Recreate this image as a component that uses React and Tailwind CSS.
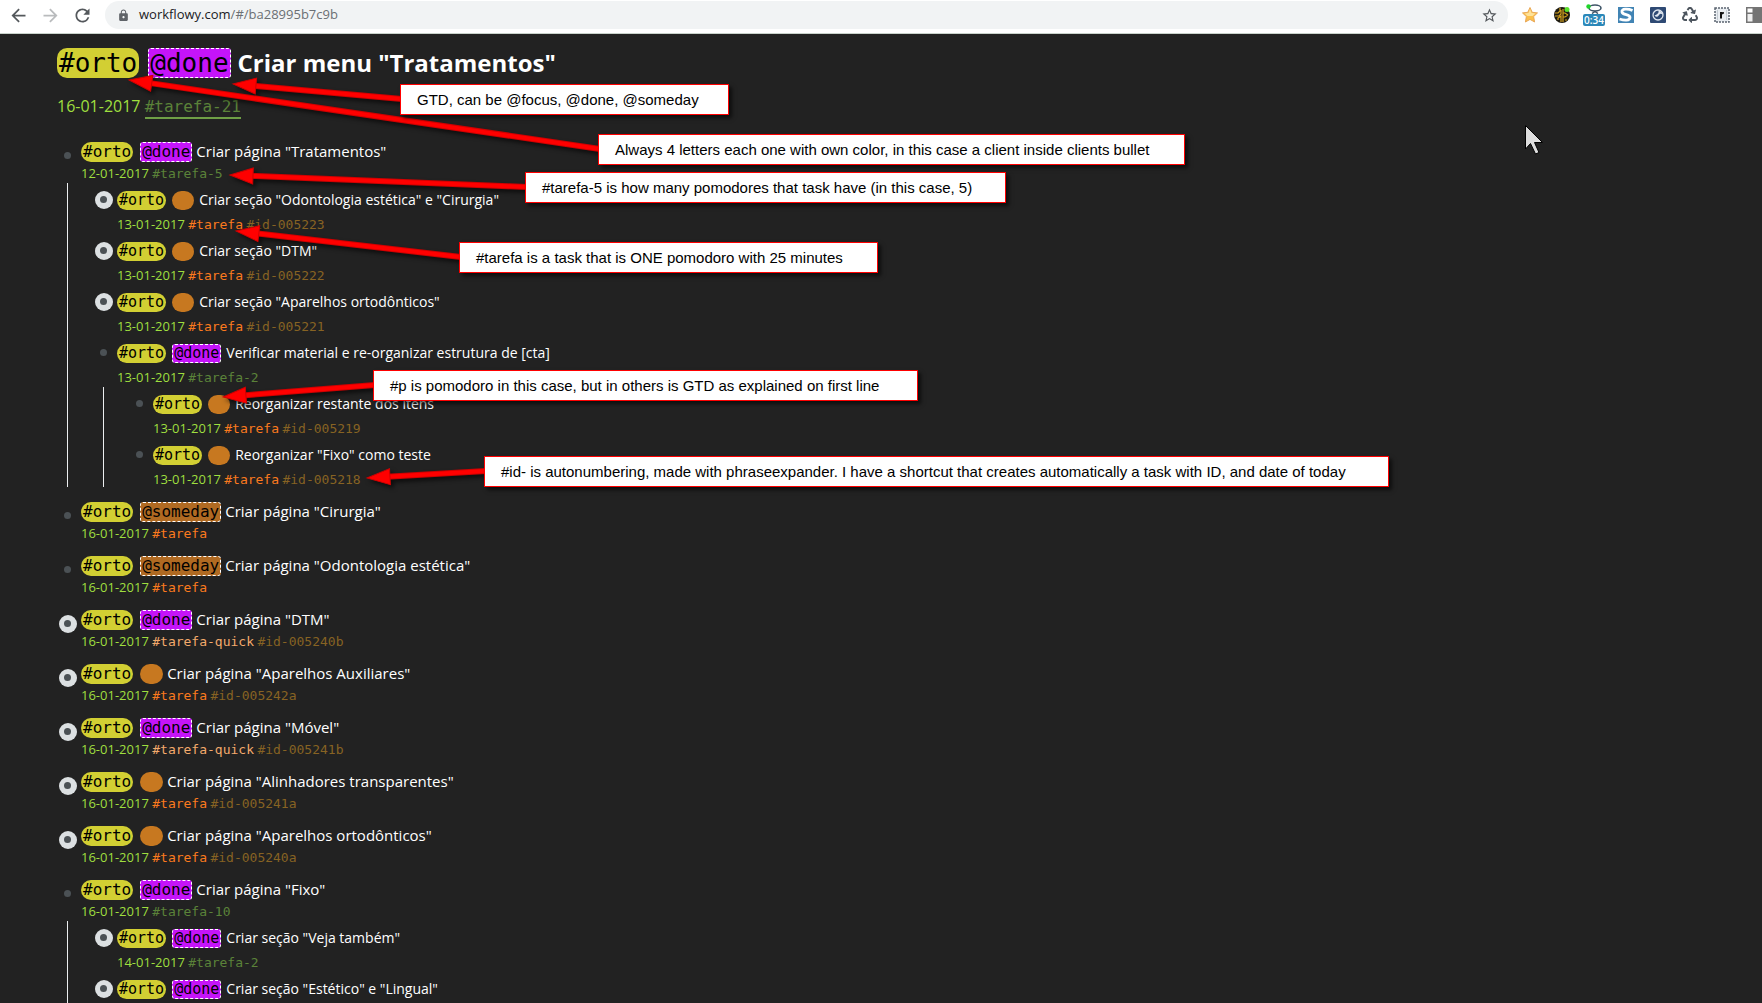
import { FaRecycle } from "react-icons/fa";
import { MdArrowBack, MdArrowForward, MdLock, MdRefresh, MdStarBorder } from "react-icons/md";

const items = [
  {
    gtd: "@done",
    title: 'Criar página "Tratamentos"',
    date: "12-01-2017",
    tag: "#tarefa-5",
    children: [
      { zoomable: true, title: 'Criar seção "Odontologia estética" e "Cirurgia"', date: "13-01-2017", tag: "#tarefa", id: "#id-005223" },
      { zoomable: true, title: 'Criar seção "DTM"', date: "13-01-2017", tag: "#tarefa", id: "#id-005222" },
      { zoomable: true, title: 'Criar seção "Aparelhos ortodônticos"', date: "13-01-2017", tag: "#tarefa", id: "#id-005221" },
      {
        gtd: "@done",
        title: "Verificar material e re-organizar estrutura de [cta]",
        date: "13-01-2017",
        tag: "#tarefa-2",
        children: [
          { title: "Reorganizar restante dos itens", date: "13-01-2017", tag: "#tarefa", id: "#id-005219" },
          { title: 'Reorganizar "Fixo" como teste', date: "13-01-2017", tag: "#tarefa", id: "#id-005218" },
        ],
      },
    ],
  },
  { gtd: "@someday", title: 'Criar página "Cirurgia"', date: "16-01-2017", tag: "#tarefa" },
  { gtd: "@someday", title: 'Criar página "Odontologia estética"', date: "16-01-2017", tag: "#tarefa" },
  { zoomable: true, gtd: "@done", title: 'Criar página "DTM"', date: "16-01-2017", tag: "#tarefa-quick", id: "#id-005240b" },
  { zoomable: true, title: 'Criar página "Aparelhos Auxiliares"', date: "16-01-2017", tag: "#tarefa", id: "#id-005242a" },
  { zoomable: true, gtd: "@done", title: 'Criar página "Móvel"', date: "16-01-2017", tag: "#tarefa-quick", id: "#id-005241b" },
  { zoomable: true, title: 'Criar página "Alinhadores transparentes"', date: "16-01-2017", tag: "#tarefa", id: "#id-005241a" },
  { zoomable: true, title: 'Criar página "Aparelhos ortodônticos"', date: "16-01-2017", tag: "#tarefa", id: "#id-005240a" },
  {
    gtd: "@done",
    title: 'Criar página "Fixo"',
    date: "16-01-2017",
    tag: "#tarefa-10",
    children: [
      { zoomable: true, gtd: "@done", title: 'Criar seção "Veja também"', date: "14-01-2017", tag: "#tarefa-2" },
      { zoomable: true, gtd: "@done", title: 'Criar seção "Estético" e "Lingual"' },
    ],
  },
];

const notes = [
  { text: "GTD, can be @focus, @done, @someday", place: "left-[400px] top-[84px] w-[329px]" },
  { text: "Always 4 letters each one with own color, in this case a client inside clients bullet", place: "left-[598px] top-[134px] w-[587px]" },
  { text: "#tarefa-5 is how many pomodores that task have (in this case, 5)", place: "left-[525px] top-[172px] w-[481px]" },
  { text: "#tarefa is a task that is ONE pomodoro with 25 minutes", place: "left-[459px] top-[242px] w-[419px]" },
  { text: "#p is pomodoro in this case, but in others is GTD as explained on first line", place: "left-[373px] top-[370px] w-[545px]" },
  { text: "#id- is autonumbering, made with phraseexpander. I have a shortcut that creates automatically a task with ID, and date of today", place: "left-[484px] top-[456px] w-[905px]" },
];

// from = the edge of the note, to = the tip of the arrow
const arrows = [
  { from: [402, 99], to: [233, 84] },
  { from: [600, 149], to: [129, 80] },
  { from: [527, 187], to: [230, 175] },
  { from: [461, 257], to: [236, 231] },
  { from: [375, 385], to: [223, 397] },
  { from: [486, 471], to: [367, 478] },
];

const gtdColors = {
  "@done": "bg-[#c514f9]",
  "@someday": "bg-[#b06a22]",
};

const tagColor = (tag) => {
  if (tag === "#tarefa") return "text-[#fb7a1e]";
  if (tag === "#tarefa-quick") return "text-[#f3aa6c]";
  return "text-[#5b8239]";
};

const Bullet = ({ zoomable }) =>
  zoomable ? (
    <span className="flex size-[18px] items-center justify-center rounded-full bg-[#dce0e2]">
      <span className="size-[7px] rounded-full bg-[#4b5155]" />
    </span>
  ) : (
    <span className="size-[7px] rounded-full bg-[#4b5155]" />
  );

const Gtd = ({ tag, nested }) => {
  if (!tag) {
    return (
      <span
        className={nested ? "ml-[6px] h-[19px] w-[22px] rounded-full bg-[#c77820]" : "ml-[7px] h-5 w-[23px] rounded-full bg-[#c77820]"}
      />
    );
  }
  return (
    <span
      className={`rounded-[3px] border border-dashed border-white px-px font-['DejaVu_Sans_Mono',monospace] text-black ${
        nested ? "ml-[6px] leading-[17px]" : "ml-[7px] leading-[18px]"
      } ${gtdColors[tag]}`}
    >
      {tag}
    </span>
  );
};

const Item = ({ item, nested }) => (
  <li className={nested ? "" : "mb-[13px]"}>
    <div className={nested ? "flex h-[51px] pt-2" : "flex h-[41px]"}>
      <a
        href="#item"
        aria-label={item.title}
        className={
          nested
            ? "-mt-px mr-1 flex size-[19px] shrink-0 items-center justify-center"
            : "mt-1 mr-1 flex size-[19px] shrink-0 items-center justify-center"
        }
      >
        <Bullet zoomable={item.zoomable} />
      </a>
      <div className="whitespace-nowrap">
        <div className={nested ? "flex h-[19px] items-start text-[15px]" : "flex h-5 items-start text-[16px]"}>
          <span
            className={
              nested
                ? "rounded-full bg-[#d2cf33] px-[2px] font-['DejaVu_Sans_Mono',monospace] leading-[19px] text-black"
                : "rounded-full bg-[#d2cf33] px-[2px] font-['DejaVu_Sans_Mono',monospace] leading-[20px] text-black"
            }
          >
            #orto
          </span>
          <Gtd tag={item.gtd} nested={nested} />
          <span className={nested ? "ml-[5px] text-[14px] leading-[18px] text-white" : "ml-1 text-[15px] leading-[18px] text-white"}>
            {item.title}
          </span>
        </div>
        {item.date && (
          <div className={nested ? "mt-1 text-[13px] leading-[20px]" : "mt-px text-[13px] leading-[20px]"}>
            <span className="text-[#9fdf3f]">{item.date}</span>{" "}
            <span className={`font-['DejaVu_Sans_Mono',monospace] ${tagColor(item.tag)}`}>{item.tag}</span>{" "}
            {item.id && <span className="font-['DejaVu_Sans_Mono',monospace] text-[#876323]">{item.id}</span>}
          </div>
        )}
      </div>
    </div>
    {item.children && (
      <ul className="relative pl-[36px] before:absolute before:top-0 before:bottom-0.5 before:left-[9px] before:w-px before:bg-[#eceef0]">
        {item.children.map((child) => (
          <Item key={child.title} item={child} nested />
        ))}
      </ul>
    )}
  </li>
);

const Arrow = ({ from, to }) => {
  const dx = from[0] - to[0];
  const dy = from[1] - to[1];
  const length = Math.hypot(dx, dy);
  const angle = (Math.atan2(dy, dx) * 180) / Math.PI;
  return (
    <g transform={`translate(${to[0]} ${to[1]}) rotate(${angle})`}>
      <path d={`M20 0H${length}`} stroke="#d00000" strokeWidth="6" strokeLinecap="round" />
      <path d={`M20 0H${length}`} stroke="#ff0000" strokeWidth="4" strokeLinecap="round" />
      <path d="M0 0L23 -8V8Z" fill="#ff0000" stroke="#d00000" />
    </g>
  );
};

const Extensions = () => (
  <div className="flex shrink-0 items-center gap-4">
    <svg width="16" height="16" viewBox="0 0 16 16">
      <path d="M8 .5l2.200 4.800 5.300.6-3.900 3.700 1 5.400L8 12.400 3.400 15l1-5.400L.5 5.900l5.300-.6z" fill="#fbc04a" stroke="#e9a85a" />
      <path d="M8 2l1.500 4 4 .5-3 2.500h-5l-3-2.500 4-.5z" fill="#fee29a" />
    </svg>
    <svg width="16" height="16" viewBox="0 0 16 16">
      <circle cx="8" cy="8" r="8" fill="#1d1a10" />
      <path d="M1 6h3l2-2V1M1 9h4l2-2V3M4 13V11l3-2v6M9 2v13M9 6h2l3 2M9 10h2l3-2M11 13h2" stroke="#d5a21f" strokeWidth="1.200" fill="none" />
      <circle cx="13" cy="2.500" r="2.500" fill="#5be02c" />
    </svg>
    <div className="-mx-[3px] flex w-[22px] flex-col items-center self-end">
      <svg width="16" height="10" viewBox="0 0 16 10">
        <ellipse cx="9" cy="4" rx="6" ry="3" fill="#fff" stroke="#3f5568" strokeWidth="1.600" />
        <path d="M6 9.500l3-2 3 2" stroke="#3f5568" strokeWidth="1.500" fill="none" />
        <circle cx="2.500" cy="2.500" r="2.200" fill="#1fd52a" />
      </svg>
      <span className="w-full rounded-[2px] bg-[#2b87b8] text-center font-['Open_Sans',sans-serif] text-[10px] leading-[12px] font-semibold text-white">
        0:34
      </span>
    </div>
    <svg width="16" height="16" viewBox="0 0 16 16">
      <rect width="16" height="16" fill="#4184b4" />
      <path d="M14.500 3.500C10 1.500 3 1.500 4 5s8 2 8 5.500-6 3-10.500 1.500" stroke="#fff" strokeWidth="2.800" fill="none" />
    </svg>
    <svg width="16" height="16" viewBox="0 0 16 16">
      <rect width="16" height="16" rx="1" fill="#2e4a74" />
      <circle cx="8" cy="8" r="5" fill="none" stroke="#dfe6ef" strokeWidth="1.300" />
      <path d="M4.500 8.500c1.500 2 3.500 1.500 4.500-.5 1-1.500 2.500-1.500 3.500-.5-.5-3-2.500-4-4.500-4 1.500 1.500 0 4-3.500 5z" fill="#dfe6ef" />
    </svg>
    <FaRecycle size={16} color="#4d555e" />
    <svg width="16" height="16" viewBox="0 0 16 16">
      <rect x="1" y="1" width="14" height="14" fill="#e9edf1" stroke="#5b6470" strokeWidth="1.500" strokeDasharray="2 1" />
      <path d="M3.500 3v10M12.500 3v10" stroke="#c5ccd3" />
      <path d="M7 5v6.500M7 7.500c.3-1.300 1.200-1.700 2.800-1.500" stroke="#111" strokeWidth="2" fill="none" />
    </svg>
    <svg width="16" height="16" viewBox="0 0 16 16">
      <rect width="16" height="16" fill="#747474" />
      <path d="M1.500 1.500h5v4h-5z" fill="#fff" />
      <path d="M1.500 7h5v7.500h-5z" fill="#efefef" />
    </svg>
  </div>
);

const App = () => {
  return (
    <div className="relative flex h-screen flex-col overflow-hidden bg-[#222222] font-['Open_Sans',sans-serif]">
      <header className="flex h-[34px] shrink-0 items-start border-b border-[#c9d3cb] bg-white pl-2">
        <div className="flex h-[30px] flex-1 items-center">
          <button type="button" aria-label="Back" className="mr-[11px] text-[#54585c]">
            <MdArrowBack size={21} />
          </button>
          <button type="button" aria-label="Forward" className="mr-[11px] text-[#b9bbbd]">
            <MdArrowForward size={21} />
          </button>
          <button type="button" aria-label="Reload" className="mr-3 text-[#54585c]">
            <MdRefresh size={21} />
          </button>
          <div className="mr-[14px] flex h-7 flex-1 items-center rounded-full bg-[#f1f3f4] pr-[10px] pl-3">
            <MdLock size={13} color="#5f6368" className="mr-[9px]" />
            <div className="flex-1 text-[13px] text-[#6b6f73]">
              <span className="text-[#202124]">workflowy.com</span>/#/ba28995b7c9b
            </div>
            <button type="button" aria-label="Bookmark">
              <MdStarBorder size={17} color="#54585c" />
            </button>
          </div>
          <Extensions />
        </div>
      </header>

      <main className="flex-1 overflow-hidden pl-[57px]">
        <h1 className="mt-3 flex h-[34px] items-center whitespace-nowrap text-white">
          <span className="h-[30px] rounded-[10px] bg-[#d2cf33] px-[2px] font-['DejaVu_Sans_Mono',monospace] text-[26px] leading-[30px] text-black">
            #orto
          </span>
          <span className="ml-[9px] rounded-[3px] border border-dashed border-white bg-[#c514f9] px-px font-['DejaVu_Sans_Mono',monospace] text-[26px] leading-[28px] text-black">
            @done
          </span>
          <span className="ml-[7px] text-[24px] leading-[32px] font-bold">Criar menu "Tratamentos"</span>
        </h1>
        <p className="mt-[14px] text-[16px] leading-[24px] text-[#9fdf3f]">
          16-01-2017{" "}
          <a
            href="#tarefa-21"
            className="inline-block border-b-2 border-[#6f9f46] font-['DejaVu_Sans_Mono',monospace] leading-[20px] text-[#5b8239]"
          >
            #tarefa-21
          </a>
        </p>
        <ul className="mt-[23px] ml-px">
          {items.map((item) => (
            <Item key={item.title} item={item} />
          ))}
        </ul>
      </main>

      <svg className="pointer-events-none absolute inset-0 h-full w-full drop-shadow-[3px_3px_2px_rgba(0,0,0,0.6)]" fill="none">
        {arrows.map((arrow) => (
          <Arrow key={arrow.to.join()} from={arrow.from} to={arrow.to} />
        ))}
      </svg>
      {notes.map((note) => (
        <div
          key={note.text}
          className={`absolute h-[31px] border border-[#ff0000] bg-white pl-4 font-['Liberation_Sans',Arial,sans-serif] text-[15px] leading-[29px] whitespace-nowrap text-black shadow-[3px_3px_4px_rgba(0,0,0,0.6)] ${note.place}`}
        >
          {note.text}
        </div>
      ))}
      <svg className="pointer-events-none absolute top-[125px] left-[1525px]" width="18" height="30" viewBox="0 0 18 30">
        <path d="M.5 .5V24l5-5.500 5 10.500 3.500-1.500-4.500-10H17.500z" fill="#dedede" stroke="#000" />
      </svg>
    </div>
  );
};

export default App;
